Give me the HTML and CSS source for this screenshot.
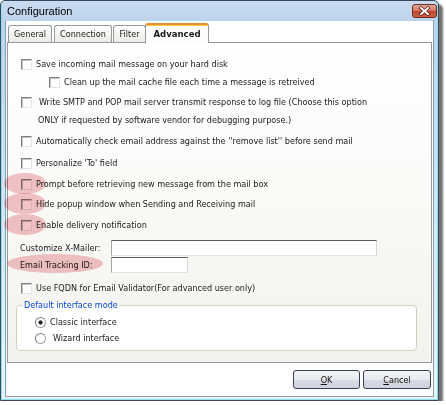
FILE: index.html
```html
<!DOCTYPE html>
<html lang="en">
<head>
    <meta charset="UTF-8" />
    <title>Configuration</title>
    <meta name="viewport" content="width=device-width, initial-scale=1.0" />
    <link rel="stylesheet" href="styles.css">
</head>

<body>

    <!-- Dialog window -->
    <div class="window">

        <!-- Title bar -->
        <div class="titlebar">
            <span class="title">Configuration</span>
            <span class="close-btn">
                <svg width="25" height="14" viewBox="0 0 25 14">
                    <path d="M9 4 L16 10 M16 4 L9 10" stroke="#5a1d14" stroke-width="3.6" stroke-linecap="square" fill="none"/>
                    <path d="M9 4 L16 10 M16 4 L9 10" stroke="#ffffff" stroke-width="2" stroke-linecap="square" fill="none"/>
                </svg>
            </span>
        </div>

        <div class="client">

            <!-- Tabs -->
            <div class="tabs">
                <div class="tab tab-general">General</div>
                <div class="tab tab-connection">Connection</div>
                <div class="tab tab-filter">Filter</div>
                <div class="tab tab-advanced active">Advanced</div>
            </div>

            <!-- Advanced page -->
            <div class="panel">
                <div class="row r-save"><span class="cb"></span><span class="lbl">Save incoming mail message on your hard disk</span></div>
                <div class="row r-clean"><span class="cb"></span><span class="lbl">Clean up the mail cache file each time a message is retreived</span></div>
                <div class="row r-write"><span class="cb"></span><span class="lbl lbl-wide">Write SMTP and POP mail server transmit response to log file (Choose this option</span></div>
                <div class="row r-only"><span class="lbl">ONLY if requested by software vendor for debugging purpose.)</span></div>
                <div class="row r-auto"><span class="cb"></span><span class="lbl">Automatically check email address against the ''remove list'' before send mail</span></div>
                <div class="row r-pers"><span class="cb"></span><span class="lbl">Personalize 'To' field</span></div>
                <div class="row r-prompt"><span class="hl hl-cb"></span><span class="cb"></span><span class="lbl">Prompt before retrieving new message from the mail box</span></div>
                <div class="row r-hide"><span class="hl hl-cb"></span><span class="cb"></span><span class="lbl">Hide popup window when Sending and Receiving mail</span></div>
                <div class="row r-enable"><span class="hl hl-cb"></span><span class="cb"></span><span class="lbl">Enable delivery notification</span></div>

                <div class="row field-row r-mailer">
                    <span class="field-lbl">Customize X-Mailer:</span>
                    <input type="text" class="field field-mailer">
                </div>
                <div class="row field-row r-track">
                    <span class="hl hl-track"></span>
                    <span class="field-lbl">Email Tracking ID:</span>
                    <input type="text" class="field field-track">
                </div>

                <div class="row r-fqdn"><span class="cb"></span><span class="lbl">Use FQDN for Email Validator(For advanced user only)</span></div>

                <fieldset class="group">
                    <legend>Default interface mode</legend>
                    <div class="radio-row r-classic"><span class="radio checked"></span><span class="lbl">Classic interface</span></div>
                    <div class="radio-row r-wizard"><span class="radio"></span><span class="lbl lbl-wizard">Wizard interface</span></div>
                </fieldset>
            </div>

            <!-- Dialog buttons -->
            <div class="buttons">
                <button class="btn btn-ok"><u>O</u>K</button>
                <button class="btn btn-cancel"><u>C</u>ancel</button>
            </div>
        </div>
    </div>

</body>
</html>
```

FILE: styles.css
```css
/* --- Page --- */
body {
    margin: 0;
    padding: 0;
    background: #ffffff;
    font-family: "DejaVu Sans Condensed", "DejaVu Sans", sans-serif;
    font-stretch: condensed;
    font-size: 9px;
    color: #1a1a1a;
}

/* --- Window frame --- */
.window {
    width: 439px;
    height: 401px;
    box-sizing: border-box;
    border: 1px solid #3b4859;
    border-radius: 5px 5px 0 0;
    background: linear-gradient(#c8dbf1 0, #bed3ec 20px, #d4e6f6 200px, #e8f5fc 100%);
    box-shadow: inset 1px -1px 0 #86e2f2, inset -1px 0 0 #86e2f2, 4px 4px 2px rgba(0,0,0,0.55);
    display: flex;
    flex-direction: column;
}

.titlebar {
    height: 19px;
    display: flex;
    padding: 0 1px 0 6px;
}

.title {
    font-family: "Liberation Sans", Arial, sans-serif;
    font-stretch: normal;
    font-size: 11px;
    line-height: 20px;
    color: #000;
}

.close-btn {
    margin-left: auto;
    margin-top: 3px;
    width: 25px;
    height: 14px;
    box-sizing: border-box;
    border: 1px solid #6e2a20;
    border-radius: 3px;
    background: linear-gradient(#e9aa9c 0, #d77a66 45%, #c4442c 55%, #cf6048 100%);
    display: flex;
}

.close-btn svg {
    margin: -1px;
}

.client {
    flex: 1;
    margin: 0 4px 3px 4px;
    border: 1px solid #8c9cb2;
    border-top-color: #bcd2ea;
    background: #ffffff;
    padding: 2px 1px 0 1px;
}

/* --- Tabs --- */
.tabs {
    display: flex;
    align-items: flex-end;
    height: 20px;
    padding-left: 1px;
    position: relative;
    z-index: 1;
}

.tab {
    height: 17px;
    box-sizing: border-box;
    margin-bottom: 1px;
    border: 1px solid #919b9c;
    border-bottom: none;
    border-radius: 3px 3px 0 0;
    background: linear-gradient(#ffffff, #ecebe6);
    text-align: center;
    line-height: 16px;
}

.tab-general { width: 44px; }
.tab-connection { width: 58px; margin-left: 2px; }
.tab-filter { width: 33px; margin-left: 1px; }

.tab.active {
    width: 64px;
    height: 20px;
    margin-left: -1px;
    margin-bottom: 0;
    background: #fcfcfe;
    border-top: 2px solid #e8922e;
    box-shadow: inset 0 1px 0 #ffc83c;
    font-weight: bold;
    font-size: 9.5px;
    line-height: 18px;
}

/* --- Page content --- */
.panel {
    height: 321px;
    box-sizing: border-box;
    margin-top: -1px;
    border: 1px solid #919b9c;
    background: linear-gradient(#ffffff 0, #fbfbf9 120px, #f3f2ed 100%);
    padding-top: 12px;
}

.row {
    position: relative;
    height: 18px;
    display: flex;
    align-items: center;
    padding-left: 13px;
}

.lbl {
    position: relative;
    line-height: 12px;
    margin-left: 4px;
    white-space: nowrap;
}

.lbl-wide { margin-left: 7px; }

.r-clean { padding-left: 41px; }
.r-write { margin-top: 2px; }
.r-only { padding-left: 30px; }
.r-only .lbl { margin-left: 0; }
.r-auto { margin-top: 3px; }
.r-pers { margin-top: 4px; }
.r-prompt { margin-top: 3px; }
.r-hide { margin-top: 2px; }
.r-enable { margin-top: 3px; }
.r-mailer { margin-top: 6px; }
.r-track { margin-top: 1px; }
.r-fqdn { margin-top: 6px; }

.cb {
    position: relative;
    width: 11px;
    height: 11px;
    box-sizing: border-box;
    border: 1px solid;
    border-color: #7f7f7f #e3e3e3 #e3e3e3 #7f7f7f;
    box-shadow: inset 1px 1px 0 #c4c4c4;
    background: #ffffff;
    flex-shrink: 0;
}

/* --- Text fields --- */
.field-row {
    height: 16px;
    padding-left: 12px;
}

.field-lbl {
    position: relative;
    width: 91px;
    white-space: nowrap;
}

.field {
    height: 16px;
    box-sizing: border-box;
    margin: 0;
    padding: 0;
    border: 1px solid;
    border-color: #5a5a5a #d6d6d6 #e4e4e4 #a6a6a6;
    background: #ffffff;
}

.field-mailer { width: 266px; }
.field-track { width: 77px; }

/* --- Pink markers drawn on the screenshot --- */
.hl {
    position: absolute;
    border-radius: 50%;
    background: #f4c4c7;
    mix-blend-mode: multiply;
    z-index: 2;
}

.hl-cb {
    left: -4px;
    top: -2px;
    width: 42px;
    height: 21px;
}

.hl-track {
    left: -1px;
    top: -3px;
    width: 96px;
    height: 19px;
}

/* --- Interface mode group --- */
.group {
    width: 401px;
    box-sizing: border-box;
    margin: 2px 0 0 8px;
    padding: 0 0 5px 6px;
    border: 1px solid #d0d0bf;
    border-radius: 4px;
    background: #ffffff;
}

.group legend {
    padding: 0 1px;
    line-height: 12px;
    color: #0046d5;
}

.radio-row {
    height: 14px;
    display: flex;
    align-items: center;
    padding-left: 12px;
}

.r-classic { margin-top: 4px; }
.r-wizard { margin-top: 2px; }

.radio {
    width: 11px;
    height: 11px;
    box-sizing: border-box;
    border: 1px solid #a3a3a3;
    border-top-color: #7d7d7d;
    border-left-color: #7d7d7d;
    border-radius: 50%;
    background: #ffffff;
}

.radio.checked {
    background: radial-gradient(circle, #202020 0, #202020 1.8px, #ffffff 2.4px);
}

.lbl-wizard { margin-left: 7px; }

/* --- Buttons --- */
.buttons {
    display: flex;
    justify-content: flex-end;
    gap: 3px;
    margin-top: 7px;
    padding-right: 1px;
}

.btn {
    height: 19px;
    box-sizing: border-box;
    padding: 0;
    border: 1px solid #353f52;
    border-radius: 3px;
    background: linear-gradient(#f4f4f6 0, #e9eaf0 50%, #d9dbe4 51%, #cfd2dd 100%);
    font-family: "DejaVu Sans Condensed", "DejaVu Sans", sans-serif;
    font-stretch: condensed;
    font-size: 9px;
    color: #111;
    cursor: pointer;
}

.btn-ok { width: 67px; }
.btn-cancel { width: 68px; }
```
